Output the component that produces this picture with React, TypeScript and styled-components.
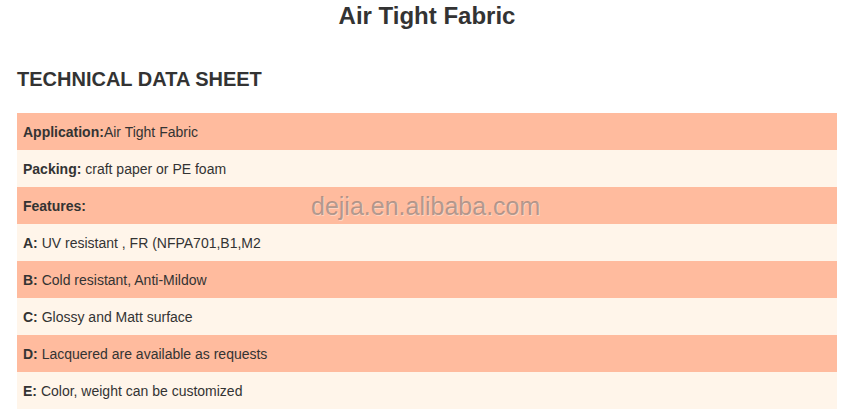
import React from 'react';
import styled, { createGlobalStyle } from 'styled-components';

const GlobalStyle = createGlobalStyle`
  body {
    margin: 0;
    background: #fff;
    font-family: Arial, 'Liberation Sans', sans-serif;
    color: #333;
  }
`;

const Page = styled.div`
  position: relative;
  width: 848px;
  height: 417px;
  padding: 0 11px 0 17px;
  box-sizing: border-box;
`;

const Title = styled.h1`
  margin: 0;
  padding-top: 2px;
  text-align: center;
  font-size: 24px;
  line-height: 28px;
  font-weight: bold;
  color: #333;
`;

const SectionTitle = styled.h2`
  margin: 37px 0 0;
  font-size: 20px;
  line-height: 24px;
  font-weight: bold;
  color: #333;
`;

const Table = styled.div`
  margin-top: 22px;
  display: flex;
  flex-direction: column;
`;

const Row = styled.div<{ $shade: boolean }>`
  height: 37px;
  display: flex;
  align-items: center;
  padding-left: 6px;
  font-size: 14px;
  color: #333;
  background: ${(p) => (p.$shade ? '#ffbb9e' : '#fff5ea')};
`;

const Watermark = styled.div`
  position: absolute;
  left: 311px;
  top: 192px;
  font-size: 25px;
  color: rgba(110, 110, 110, 0.55);
  text-shadow: 1px 1px 0 rgba(255, 255, 255, 0.35);
  pointer-events: none;
`;

const rows: [string, string][] = [
  ['Application:', 'Air Tight Fabric'],
  ['Packing:', ' craft paper or PE foam'],
  ['Features:', ''],
  ['A:', ' UV resistant , FR (NFPA701,B1,M2'],
  ['B:', ' Cold resistant, Anti-Mildow'],
  ['C:', ' Glossy and Matt surface'],
  ['D:', ' Lacquered are available as requests'],
  ['E:', ' Color, weight can be customized'],
];

const App: React.FC = () => (
  <Page>
    <GlobalStyle />
    <Title>Air Tight Fabric</Title>
    <SectionTitle>TECHNICAL DATA SHEET</SectionTitle>
    <Table>
      {rows.map(([label, text], i) => (
        <Row key={label} $shade={i % 2 === 0}>
          <span style={{ whiteSpace: 'pre' }}>
            <b>{label}</b>
            {text}
          </span>
        </Row>
      ))}
    </Table>
    <Watermark>dejia.en.alibaba.com</Watermark>
  </Page>
);

export default App;
